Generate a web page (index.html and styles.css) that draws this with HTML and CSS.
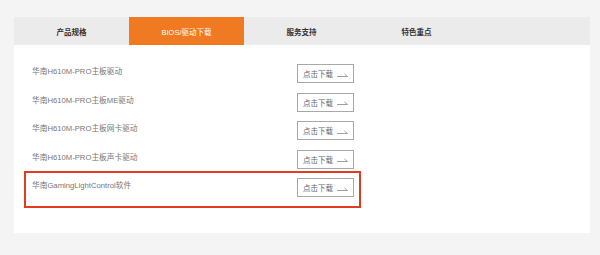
FILE: index.html
```html
<!DOCTYPE html>
<html lang="zh-CN">
<head>
    <meta charset="UTF-8">
    <meta name="viewport" content="width=device-width, initial-scale=1.0">
    <title>BIOS/驱动下载</title>
    <link rel="stylesheet" href="styles.css">
</head>
<body>
    <div class="panel">
        <div class="tabs">
            <div class="tab">产品规格</div>
            <div class="tab active">BIOS/驱动下载</div>
            <div class="tab">服务支持</div>
            <div class="tab">特色重点</div>
        </div>

        <div class="downloads">
            <div class="row">
                <span class="name">华南H610M-PRO主板驱动</span>
                <a class="btn" href="#">点击下载 <svg class="arrow" width="11" height="5" viewBox="0 0 11 5"><path d="M0 4.5H10.5M10.5 4.5L7.5 2" /></svg></a>
            </div>
            <div class="row">
                <span class="name">华南H610M-PRO主板ME驱动</span>
                <a class="btn" href="#">点击下载 <svg class="arrow" width="11" height="5" viewBox="0 0 11 5"><path d="M0 4.5H10.5M10.5 4.5L7.5 2" /></svg></a>
            </div>
            <div class="row">
                <span class="name">华南H610M-PRO主板网卡驱动</span>
                <a class="btn" href="#">点击下载 <svg class="arrow" width="11" height="5" viewBox="0 0 11 5"><path d="M0 4.5H10.5M10.5 4.5L7.5 2" /></svg></a>
            </div>
            <div class="row">
                <span class="name">华南H610M-PRO主板声卡驱动</span>
                <a class="btn" href="#">点击下载 <svg class="arrow" width="11" height="5" viewBox="0 0 11 5"><path d="M0 4.5H10.5M10.5 4.5L7.5 2" /></svg></a>
            </div>
            <div class="row highlight">
                <span class="name">华南GamingLightControl软件</span>
                <a class="btn" href="#">点击下载 <svg class="arrow" width="11" height="5" viewBox="0 0 11 5"><path d="M0 4.5H10.5M10.5 4.5L7.5 2" /></svg></a>
            </div>
        </div>
    </div>
</body>
</html>
```

FILE: styles.css
```css
body {
    margin: 0;
    background: #f4f4f4;
    font-family: "Liberation Sans", "Noto Sans CJK SC", sans-serif;
}
.panel {
    width: 576px;
    margin: 17px 0 0 14px;
    background: #fff;
}
.tabs {
    display: flex;
    height: 28px;
    background: #ebebeb;
}
.tab {
    width: 115px;
    display: flex;
    align-items: center;
    justify-content: center;
    font-size: 7.5px;
    font-weight: bold;
    color: #333;
}
.tab.active {
    background: #ef7a21;
    color: #fff;
    font-weight: normal;
}
.downloads {
    padding: 17px 0 25px 18px;
}
.row {
    width: 322px;
    height: 28.5px;
    display: flex;
    align-items: flex-start;
    justify-content: space-between;
}
.name {
    font-size: 7.7px;
    line-height: 19px;
    color: #777;
}
.btn {
    margin-top: 2px;
    width: 57px;
    height: 19px;
    box-sizing: border-box;
    border: 1px solid #a8a8a8;
    display: flex;
    align-items: center;
    justify-content: center;
    gap: 4px;
    font-size: 7.5px;
    color: #666;
    text-decoration: none;
}
.arrow {
    fill: none;
    stroke: #888;
    stroke-width: 0.8;
    margin-top: 1px;
}
.highlight {
    border: 2px solid #e23b1f;
    margin: -5px -7px 0 -8px;
    padding: 3px 5px 1.5px 6px;
}
```
